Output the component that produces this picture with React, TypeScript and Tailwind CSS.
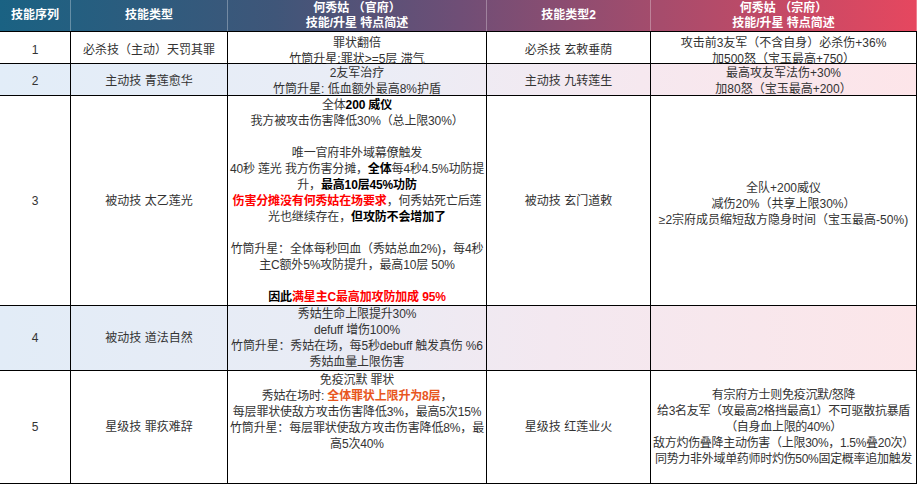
import React from "react";

const cols = "grid grid-cols-[71px_157px_259px_164px_266px]";
const cell = "border-r border-black flex flex-col items-center justify-center text-center leading-4 whitespace-nowrap overflow-visible";
const hcell = "border-r border-white/30 flex flex-col items-center justify-center text-center leading-[15px] whitespace-nowrap";

const B = ({ children }: { children: React.ReactNode }) => (
  <span className="font-bold text-black">{children}</span>
);
const R = ({ children }: { children: React.ReactNode }) => (
  <span className="font-bold text-[#ff0000]">{children}</span>
);

export default function App() {
  return (
    <div
      className="w-[917px] h-[485px] bg-white text-[12px] text-[#333333] overflow-hidden"
      style={{ fontFamily: '"Liberation Sans", "Noto Sans CJK SC", sans-serif' }}
    >
      {/* Header */}
      <div className={`${cols} h-[32px] border-b border-black text-white font-bold bg-[linear-gradient(to_right,#1a6283_0%,#3f5679_30%,#6f4e76_50%,#a64c6c_72%,#e6475f_100%)]`}>
        <div className={hcell}>技能序列</div>
        <div className={hcell}>技能类型</div>
        <div className={hcell}>
          <div>何秀姑 （官府）</div>
          <div>技能/升星 特点简述</div>
        </div>
        <div className={hcell}>技能类型2</div>
        <div className={hcell}>
          <div>何秀姑 （宗府）</div>
          <div>技能/升星 特点简述</div>
        </div>
      </div>

      {/* Row 1 */}
      <div className={`${cols} h-[32px] border-b border-black bg-white`}>
        <div className={cell}>1</div>
        <div className={cell}>必杀技（主动）天罚其罪</div>
        <div className={`${cell} pt-[3px]`}>
          <div>罪状翻倍</div>
          <div>竹筒升星:罪状&gt;=5层 滞气</div>
        </div>
        <div className={cell}>必杀技 玄敕垂荫</div>
        <div className={`${cell} pt-[3px]`}>
          <div>攻击前3友军（不含自身）必杀伤+36%</div>
          <div>加500怒（宝玉最高+750）</div>
        </div>
      </div>

      {/* Row 2 */}
      <div className={`${cols} h-[32px] border-b border-black bg-[linear-gradient(to_right,#e2edf8_0%,#eaedf6_40%,#f6e8ef_70%,#fde5e9_100%)]`}>
        <div className={cell}>2</div>
        <div className={cell}>主动技 青莲愈华</div>
        <div className={`${cell} pt-[1px]`}>
          <div>2友军治疗</div>
          <div>竹筒升星: 低血额外最高8%护盾</div>
        </div>
        <div className={cell}>主动技 九转莲生</div>
        <div className={`${cell} pt-[1px]`}>
          <div>最高攻友军法伤+30%</div>
          <div>加80怒（宝玉最高+200）</div>
        </div>
      </div>

      {/* Row 3 */}
      <div className={`${cols} h-[210px] border-b border-black bg-white`}>
        <div className={cell}>3</div>
        <div className={cell}>被动技 太乙莲光</div>
        <div className={`${cell} tracking-[-0.15px]`}>
          <div>全体<B>200 威仪</B></div>
          <div>我方被攻击伤害降低30%（总上限30%）</div>
          <div>&nbsp;</div>
          <div>唯一官府非外域幕僚触发</div>
          <div>40秒 莲光 我方伤害分摊，<B>全体</B>每4秒4.5%功防提</div>
          <div>升，<B>最高10层45%功防</B></div>
          <div><R>伤害分摊没有何秀姑在场要求</R>，何秀姑死亡后莲</div>
          <div>光也继续存在，<B>但攻防不会增加了</B></div>
          <div>&nbsp;</div>
          <div>竹筒升星：全体每秒回血（秀姑总血2%)，每4秒</div>
          <div>主C额外5%攻防提升，最高10层 50%</div>
          <div>&nbsp;</div>
          <div><B>因此</B><R>满星主C最高加攻防加成 95%</R></div>
        </div>
        <div className={cell}>被动技 玄门道敕</div>
        <div className={`${cell} pt-[6px]`}>
          <div>全队+200威仪</div>
          <div>减伤20%（共享上限30%）</div>
          <div>≥2宗府成员缩短敌方隐身时间（宝玉最高-50%)</div>
        </div>
      </div>

      {/* Row 4 */}
      <div className={`${cols} h-[65px] border-b border-black bg-[linear-gradient(to_right,#e2ecf7_0%,#e9ecf5_35%,#f3e8f0_60%,#fce6e9_100%)]`}>
        <div className={cell}>4</div>
        <div className={cell}>被动技 道法自然</div>
        <div className={`${cell} tracking-[-0.15px]`}>
          <div>秀姑生命上限提升30%</div>
          <div>defuff 增伤100%</div>
          <div>竹筒升星：秀姑在场，每5秒debuff 触发真伤 %6</div>
          <div>秀姑血量上限伤害</div>
        </div>
        <div className={cell}></div>
        <div className={cell}></div>
      </div>

      {/* Row 5 */}
      <div className={`${cols} h-[113px] border-b border-black bg-white`}>
        <div className={cell}>5</div>
        <div className={cell}>星级技 罪疚难辞</div>
        <div className="border-r border-black flex flex-col items-center justify-start text-center leading-4 whitespace-nowrap pt-[1px] tracking-[-0.15px]">
          <div>免疫沉默 罪状</div>
          <div>秀姑在场时: <span className="font-bold text-[#e8561e]">全体罪状上限升为8层</span>，</div>
          <div>每层罪状使敌方攻击伤害降低3%，最高5次15%</div>
          <div>竹筒升星：每层罪状使敌方攻击伤害降低8%，最</div>
          <div>高5次40%</div>
        </div>
        <div className={cell}>星级技 红莲业火</div>
        <div className={`${cell} tracking-[-0.3px]`}>
          <div>有宗府方士则免疫沉默/怒降</div>
          <div>给3名友军（攻最高2格挡最高1）不可驱散抗暴盾</div>
          <div>（自身血上限的40%）</div>
          <div>敌方灼伤叠降主动伤害（上限30%，1.5%叠20次）</div>
          <div>同势力非外域单药师时灼伤50%固定概率追加触发</div>
        </div>
      </div>
    </div>
  );
}
